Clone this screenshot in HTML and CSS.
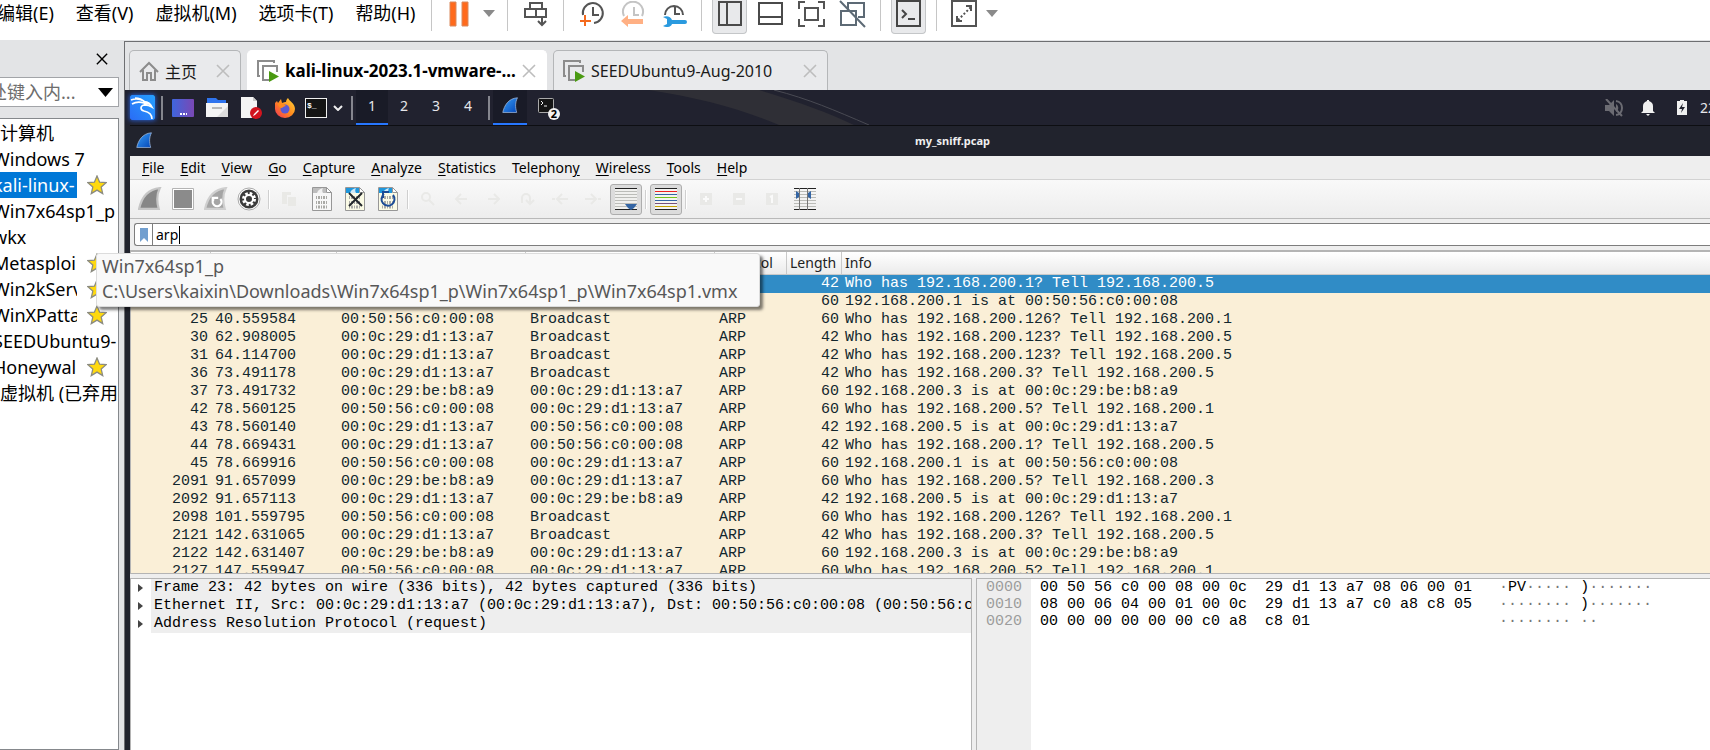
FILE: index.html
```
<!DOCTYPE html>
<html lang="zh-CN">
<head>
    <meta charset="UTF-8">
    <meta name="viewport" content="width=device-width, initial-scale=1.0">
    <title>kali-linux-2023.1 - VMware Workstation</title>
    <link rel="stylesheet" href="styles.css">
</head>
<body>
    <svg class="defs" width="0" height="0">
        <defs>
            <linearGradient id="fin-blue" x1="0" y1="0" x2="1" y2="1">
                <stop offset="0" stop-color="#3aa0f5"/>
                <stop offset="1" stop-color="#0345b8"/>
            </linearGradient>
            <linearGradient id="kali-bg" x1="0" y1="1" x2="1" y2="0">
                <stop offset="0" stop-color="#2a6cf5"/>
                <stop offset="1" stop-color="#25a0ff"/>
            </linearGradient>
            <linearGradient id="desk-bg" x1="0" y1="0" x2="1" y2="0">
                <stop offset="0" stop-color="#3f66dd"/>
                <stop offset="1" stop-color="#7a48b4"/>
            </linearGradient>
            <linearGradient id="fox-bg" x1="1" y1="0" x2="0" y2="1">
                <stop offset="0" stop-color="#ffd83a"/>
                <stop offset=".5" stop-color="#ff8a1e"/>
                <stop offset="1" stop-color="#f0305a"/>
            </linearGradient>
            <symbol id="fin" viewBox="0 0 22 22">
                <path d="M1 20C3 11 8 2 20 1c-3 6-3 12-1 19z"/>
            </symbol>
            <symbol id="star" viewBox="0 0 20 20">
                <path d="M10 1l2.6 6.2 6.6.5-5 4.4 1.5 6.5L10 15.1l-5.700 3.500 1.500-6.500-5-4.400 6.600-.5z" fill="#ffd90f" stroke="#8b8b80" stroke-width="1.300"/>
            </symbol>
            <symbol id="vm" viewBox="0 0 22 22">
                <path d="M3 16H1V1h16v2" fill="none" stroke="#8c8c8c" stroke-width="2"/>
                <path d="M12 20H6V6h14v6" fill="none" stroke="#8c8c8c" stroke-width="2"/>
                <path d="M12 11l10 5.500L12 22z" fill="#4a9a12"/>
            </symbol>
            <symbol id="cross" viewBox="0 0 14 14">
                <path d="M1 1l12 12M13 1L1 13" fill="none" stroke="currentColor" stroke-width="1.600"/>
            </symbol>
            <symbol id="bits" viewBox="0 0 20 24">
                <path d="M.5.5h14l5 5v18H.5z" fill="var(--paper)" stroke="#979797"/>
                <path d="M1 1h13v5H1z" fill="var(--band)"/>
                <path d="M5 6c1-3 3-4 6-5-1 2-1 3 0 5z" fill="#fff" opacity=".8"/>
                <path d="M14.500.5v5h5z" fill="#fff" stroke="#979797"/>
                <g fill="none" stroke="#aaaaa6" stroke-width="3">
                    <path d="M4 10.500h12M4 15.500h12M4 20h12" stroke-dasharray="1 1 2 1"/>
                </g>
            </symbol>
        </defs>
    </svg>

    <header class="app-bar">
        <nav class="app-menu">
            <a href="#">编辑(E)</a>
            <a href="#">查看(V)</a>
            <a href="#">虚拟机(M)</a>
            <a href="#">选项卡(T)</a>
            <a href="#">帮助(H)</a>
        </nav>
        <div class="tool-group tool-group--power">
            <button type="button" aria-label="暂停">
                <svg width="20" height="26"><path d="M1 1h6v24H1zM13 1h6v24h-6z" fill="#ff6a1c" stroke="#d98a5e"/></svg>
            </button>
            <button type="button" aria-label="电源选项">
                <svg width="12" height="7"><path d="M0 0h12L6 7z" fill="#8a8a8a"/></svg>
            </button>
        </div>
        <div class="tool-group">
            <button type="button" aria-label="发送 Ctrl+Alt+Del">
                <svg width="24" height="26" fill="none" stroke="#545454" stroke-width="2">
                    <path d="M6 8V2h12v6M1 8h11v8H1zM12 8h10v8H12M18 16v8M14 20l4 4 4-4"/>
                </svg>
            </button>
        </div>
        <div class="tool-group">
            <button type="button" aria-label="拍摄快照">
                <svg width="26" height="26" fill="none" stroke="#545454" stroke-width="2">
                    <path d="M4 14A10 10 0 1 1 15 22M14 6v8h6"/>
                    <path d="M1 20h11M6 14v11" stroke="#f46a1e"/>
                </svg>
            </button>
            <button type="button" aria-label="恢复快照">
                <svg width="26" height="26" fill="none" stroke="#c4c4c4" stroke-width="2">
                    <path d="M4 15A10 10 0 1 1 22 15M14 6v8h5"/>
                    <path d="M1 20l7-6v4h15v5H8v3z" fill="#ffb084" stroke="none"/>
                </svg>
            </button>
            <button type="button" aria-label="管理快照">
                <svg width="26" height="26" fill="none" stroke="#545454" stroke-width="2">
                    <path d="M4 14A9 9 0 1 1 22 14M14 5v8h5"/>
                    <path d="M2 16c4-2 8 0 9 3h13a2 2 0 0 1 0 4H11c-1 3-5 4-9 2l4-2v-5z" fill="#2a9adf" stroke="none"/>
                </svg>
            </button>
        </div>
        <div class="tool-group">
            <button type="button" class="is-on" aria-label="显示库">
                <svg width="24" height="26" fill="none" stroke="#4a4a4a" stroke-width="2"><path d="M1 2h22v23H1zM9 2v23"/></svg>
            </button>
            <button type="button" aria-label="缩略图栏">
                <svg width="25" height="24" fill="none" stroke="#4a4a4a" stroke-width="2"><path d="M1 1h23v21H1zM1 15h23"/></svg>
            </button>
            <button type="button" aria-label="全屏">
                <svg width="27" height="28" fill="none" stroke="#545454" stroke-width="2">
                    <path d="M1 9V2h6M20 2h6v7M26 19v7h-6M7 26H1v-7M7 8h13v12H7z"/>
                </svg>
            </button>
            <button type="button" aria-label="Unity">
                <svg width="27" height="28" fill="none" stroke="#5d6a75" stroke-width="2">
                    <path d="M9 9V3h16v14h-6M2 11h15v14H2zM1 1l25 26"/>
                </svg>
            </button>
        </div>
        <div class="tool-group">
            <button type="button" class="is-on" aria-label="控制台">
                <svg width="27" height="27" fill="none" stroke="#454545" stroke-width="2">
                    <path d="M2 1h23v25H2zM7 10l4 4-4 4M13 19h7"/>
                </svg>
            </button>
        </div>
        <div class="tool-group tool-group--fit">
            <button type="button" aria-label="自由拉伸">
                <svg width="27" height="27" fill="none" stroke="#545454" stroke-width="2">
                    <path d="M1 1h24v25H1zM15 6h5v5M6 16v5h5"/><path d="M7 20L20 7" stroke-dasharray="2 2"/>
                </svg>
            </button>
            <button type="button" aria-label="拉伸选项">
                <svg width="12" height="7"><path d="M0 0h12L6 7z" fill="#8a8a8a"/></svg>
            </button>
        </div>
    </header>

    <main class="main">
        <aside class="library">
            <div class="library-head">
                <button type="button" aria-label="关闭库"><svg width="12" height="12"><use href="#cross"/></svg></button>
            </div>
            <div class="library-search">
                <input type="text" aria-label="搜索库" placeholder="处键入内...">
                <button type="button" aria-label="筛选"><svg width="15" height="9"><path d="M0 0h15L7.500 9z"/></svg></button>
            </div>
            <ul class="library-list">
                <li><span class="vm-name vm-name--root">计算机</span></li>
                <li><span class="vm-name">Windows 7</span></li>
                <li class="is-selected"><span class="vm-name">kali-linux-</span><svg class="star"><use href="#star"/></svg></li>
                <li><span class="vm-name">Win7x64sp1_p</span></li>
                <li><span class="vm-name">wkx</span></li>
                <li><span class="vm-name">Metasploi</span><svg class="star"><use href="#star"/></svg></li>
                <li><span class="vm-name">Win2kServ</span><svg class="star"><use href="#star"/></svg></li>
                <li><span class="vm-name">WinXPatta</span><svg class="star"><use href="#star"/></svg></li>
                <li><span class="vm-name">SEEDUbuntu9-</span></li>
                <li><span class="vm-name">Honeywal</span><svg class="star"><use href="#star"/></svg></li>
                <li><span class="vm-name vm-name--root">虚拟机 (已弃用)</span></li>
            </ul>
            <div class="tooltip" role="tooltip">Win7x64sp1_p<br>C:\Users\kaixin\Downloads\Win7x64sp1_p\Win7x64sp1_p\Win7x64sp1.vmx</div>
        </aside>

        <section class="workspace">
            <div class="tabs">
                <div class="tab tab--home">
                    <svg width="20" height="20" fill="none" stroke="#8c8c8c" stroke-width="2"><path d="M1 11l9-9 9 9M4 9v10h4v-7h4v7h4V9"/></svg>
                    <span>主页</span>
                    <button type="button" aria-label="关闭"><svg width="14" height="14"><use href="#cross"/></svg></button>
                </div>
                <div class="tab tab--kali tab--active">
                    <svg width="22" height="22"><use href="#vm"/></svg>
                    <span>kali-linux-2023.1-vmware-...</span>
                    <button type="button" aria-label="关闭"><svg width="14" height="14"><use href="#cross"/></svg></button>
                </div>
                <div class="tab tab--seed">
                    <svg width="22" height="22"><use href="#vm"/></svg>
                    <span>SEEDUbuntu9-Aug-2010</span>
                    <button type="button" aria-label="关闭"><svg width="14" height="14"><use href="#cross"/></svg></button>
                </div>
            </div>

            <div class="panel">
                <button type="button" class="panel-kali" aria-label="Applications">
                    <svg width="25" height="25">
                        <rect width="25" height="25" rx="2" fill="url(#kali-bg)"/>
                        <path d="M1 5c5-2 9-1 13 1M2 9c5-3 9-2 12-1M5 3c4 0 7 1 10 4 4 0 6 3 7 5-3-2-6-2-8-2-4 1-4 5 0 6 5 1 8 3 8 8" fill="none" stroke="#fff" stroke-width="1.600"/>
                        <path d="M13 6c5 0 7 2 9 5-3-2-5-1-8-1z" fill="#fff"/>
                    </svg>
                </button>
                <i class="panel-sep"></i>
                <button type="button" class="launcher" aria-label="Show Desktop">
                    <svg width="22" height="18"><rect width="22" height="18" rx="1" fill="url(#desk-bg)"/><path d="M8 15h7" stroke="#fff" stroke-width="2" stroke-dasharray="2 1"/></svg>
                </button>
                <button type="button" class="launcher" aria-label="Files">
                    <svg width="22" height="21"><path d="M1 6V1h9l2 2h8v5z" fill="#2f74ee"/><path d="M0 6h22v14H0z" fill="#f4f4f4"/><path d="M22 9v11H11z" fill="#dcdcdc"/><path d="M6 11h10" stroke="#b9b9b9" stroke-width="2"/></svg>
                </button>
                <button type="button" class="launcher" aria-label="Text Editor">
                    <svg width="22" height="22"><path d="M1 0h12l4 4v17H1z" fill="#f4f4f4"/><path d="M13 0v4h4z" fill="#c9c9c9"/><circle cx="16" cy="16" r="6" fill="#d3141e"/><path d="M13 19l1-2 4-4 1 1-4 4z" fill="#fff"/></svg>
                </button>
                <button type="button" class="launcher" aria-label="Firefox">
                    <svg width="22" height="22">
                        <path d="M1 6l2-2 1 2 3-4 1 4c2-1 3-1 4-1 0-2 1-3 2-4 1 3 7 5 7 11a10 9 0 0 1-20 0c0-2 0-4 0-6z" fill="url(#fox-bg)"/>
                        <circle cx="11" cy="12" r="4.500" fill="#5a5ad2"/>
                        <path d="M4 7c3-1 6 0 8 2-2 0-3 1-4 2-2 0-4-2-4-4z" fill="#ff8a1e"/>
                    </svg>
                </button>
                <button type="button" class="launcher launcher--term" aria-label="Terminal">
                    <svg width="22" height="20"><rect x=".5" y=".5" width="21" height="19" fill="#141414" stroke="#f0f0f0"/><text x="2" y="10" class="prompt">$_</text></svg>
                </button>
                <button type="button" class="launcher-more" aria-label="More">
                    <svg width="10" height="6"><path d="M1 1l4 4 4-4" fill="none" stroke="#eee" stroke-width="2"/></svg>
                </button>
                <i class="panel-sep"></i>
                <button type="button" class="desk desk--active">1</button>
                <button type="button" class="desk">2</button>
                <button type="button" class="desk">3</button>
                <button type="button" class="desk">4</button>
                <i class="panel-sep"></i>
                <button type="button" class="task task--active" aria-label="Wireshark">
                    <svg class="fin" width="17" height="17"><use href="#fin"/></svg>
                </button>
                <button type="button" class="task task--term" aria-label="Terminal windows">
                    <svg width="16" height="15"><rect x=".5" y=".5" width="15" height="14" rx="1" fill="#141414" stroke="#aaa"/><path d="M3 3l2 2-2 2M6 8h3" fill="none" stroke="#eee"/></svg>
                    <span class="badge">2</span>
                </button>
                <svg class="panel-art" width="220" height="35">
                    <path d="M0 0h110c40 12 68 22 95 35h-75C90 18 50 8 0 0z" fill="#2f2f36"/>
                    <path d="M125 0c35 9 60 20 95 35" fill="none" stroke="#494a53"/>
                </svg>
                <div class="tray">
                    <svg width="18" height="18" fill="#6b6b72"><path d="M0 6h4l5-5v16l-5-5H0zM11 5c3 2 3 6 0 8z"/><path d="M11 2c8 1 8 13 0 14M1 0l16 17" fill="none" stroke="#6b6b72" stroke-width="2"/></svg>
                    <svg width="14" height="16" fill="#f0f0f0"><path d="M0 13l2-2V6c0-3 2-4 4-5V0h2v1c2 1 4 2 4 5v5l2 2zM5 14h4l-2 2z"/></svg>
                    <svg class="battery" width="10" height="15" fill="#f0f0f0"><path d="M0 1h3V0h4v1h3v14H0z"/><path d="M6 3L2 9h3l-1 4 4-6H5z" fill="#22232f"/></svg>
                    <span class="clock">22</span>
                </div>
            </div>

            <div class="window">
                <div class="title-bar">
                    <svg class="fin" width="17" height="17"><use href="#fin"/></svg>
                    <h1>my_sniff.pcap</h1>
                </div>
                <div class="client">
                    <nav class="menu">
                        <a href="#"><u>F</u>ile</a>
                        <a href="#"><u>E</u>dit</a>
                        <a href="#"><u>V</u>iew</a>
                        <a href="#"><u>G</u>o</a>
                        <a href="#"><u>C</u>apture</a>
                        <a href="#"><u>A</u>nalyze</a>
                        <a href="#"><u>S</u>tatistics</a>
                        <a href="#">Telephon<u>y</u></a>
                        <a href="#"><u>W</u>ireless</a>
                        <a href="#"><u>T</u>ools</a>
                        <a href="#"><u>H</u>elp</a>
                    </nav>

                    <div class="toolbar">
                        <button type="button" aria-label="Start capture"><svg width="24" height="24" viewBox="0 0 22 22" fill="#878787" stroke="#c6c6c6" stroke-width="2"><use href="#fin"/></svg></button>
                        <button type="button" aria-label="Stop capture"><svg width="22" height="22"><path d="M.5.5h21v21H.5z" fill="#fff" stroke="#b4b4b4"/><path d="M2 2h18v18H2z" fill="#8b8b8b"/></svg></button>
                        <button type="button" aria-label="Restart capture"><svg width="24" height="24" viewBox="0 0 22 22"><use href="#fin" fill="#a5a5a5" stroke="#cfcfcf" stroke-width="2"/><path d="M9 11a4 4 0 1 0 6 0M8 15v-5h5" fill="none" stroke="#fff" stroke-width="2"/></svg></button>
                        <button type="button" aria-label="Capture options">
                            <svg width="24" height="24"><circle cx="12" cy="12" r="11" fill="#fff" stroke="#aaa"/><circle cx="12" cy="12" r="9.500" fill="#3b3b3b"/><circle cx="12" cy="12" r="5.500" fill="none" stroke="#fff" stroke-width="3" stroke-dasharray="2.500 1.820"/><circle cx="12" cy="12" r="4" fill="none" stroke="#fff" stroke-width="2"/></svg>
                        </button>
                        <i class="toolbar-sep"></i>
                        <button type="button" disabled aria-label="Open"><svg width="16" height="16" fill="#e9e9e6"><path d="M1 1h9v3H6v9H1zM7 6h8v9H7z"/></svg></button>
                        <button type="button" class="doc doc--gray" disabled aria-label="Save"><svg width="20" height="24"><use href="#bits"/></svg></button>
                        <button type="button" class="doc" aria-label="Close file"><svg width="20" height="24"><use href="#bits"/><path d="M4 6l13 13M17 6L4 19" stroke="#23282c" stroke-width="2"/></svg></button>
                        <button type="button" class="doc" aria-label="Reload file"><svg width="20" height="24"><use href="#bits"/><path d="M6 7a6.500 6.500 0 1 0 9 1M11 5H5v6" fill="none" stroke="#1c4c96" stroke-width="2"/></svg></button>
                        <i class="toolbar-sep"></i>
                        <button type="button" class="dim" disabled aria-label="Find"><svg width="16" height="16"><circle cx="6" cy="6" r="4"/><path d="M9 9l5 5"/></svg></button>
                        <button type="button" class="dim" disabled aria-label="Back"><svg width="16" height="16"><path d="M14 8H3M8 3L3 8l5 5"/></svg></button>
                        <button type="button" class="dim" disabled aria-label="Forward"><svg width="16" height="16"><path d="M2 8h11M8 3l5 5-5 5"/></svg></button>
                        <button type="button" class="dim" disabled aria-label="Go to packet"><svg width="16" height="16"><path d="M3 12V7a4 4 0 0 1 8 0v5M7 9l4 4 4-4"/></svg></button>
                        <button type="button" class="dim" disabled aria-label="First packet"><svg width="18" height="16"><path d="M17 8H7M11 3L6 8l5 5M1 8h3"/></svg></button>
                        <button type="button" class="dim" disabled aria-label="Last packet"><svg width="18" height="16"><path d="M1 8h10M7 3l5 5-5 5M14 8h3"/></svg></button>
                        <button type="button" class="is-checked" aria-label="Auto scroll">
                            <svg width="22" height="22" fill="none" stroke="#bbbcb8"><path d="M0 0h22v22H0z" fill="#f0f0ee" stroke="none"/><path d="M0 3.500h22M0 6.500h22M0 9.500h22M0 12.500h22M0 15.500h22M0 18.500h22"/><path d="M0 .5h22M0 21.500h22" stroke="#222"/><path d="M10 16h12l-3 4-3 2-3-2z" fill="#3465a4" stroke="none"/></svg>
                        </button>
                        <i class="toolbar-sep"></i>
                        <button type="button" class="is-checked" aria-label="Colorize">
                            <svg width="22" height="22"><path d="M0 0h22v22H0z" fill="#f4f4f2"/><path d="M0 .5h22M0 21.500h22" stroke="#222"/><path d="M0 3.500h22" stroke="#e22"/><path d="M0 6.500h22M0 12.500h22" stroke="#3465a4"/><path d="M0 9.500h22" stroke="#73c31a"/><path d="M0 15.500h22" stroke="#75507b"/><path d="M0 18.500h22" stroke="#c4a000"/></svg>
                        </button>
                        <i class="toolbar-sep"></i>
                        <button type="button" disabled aria-label="Zoom in"><svg width="12" height="12"><path d="M0 0h12v12H0z" fill="#e9e9e7"/><path d="M3 6h6M6 3v6" stroke="#fafafa" stroke-width="2"/></svg></button>
                        <button type="button" disabled aria-label="Zoom out"><svg width="12" height="12"><path d="M0 0h12v12H0z" fill="#e9e9e7"/><path d="M3 6h6" stroke="#fafafa" stroke-width="2"/></svg></button>
                        <button type="button" disabled aria-label="Normal size"><svg width="12" height="12"><path d="M0 0h12v12H0z" fill="#e9e9e7"/><path d="M4 4l2-1v7" fill="none" stroke="#fafafa" stroke-width="2"/></svg></button>
                        <button type="button" aria-label="Resize columns">
                            <svg width="22" height="22" fill="none" stroke="#bbbcb8"><path d="M0 3.500h22M0 6.500h22M0 9.500h22M0 12.500h22M0 15.500h22M0 18.500h22"/><path d="M0 .5h22M0 21.500h22" stroke="#222"/><path d="M5.500 0v22M13.500 0v22" stroke="#777"/><path d="M2 3l3 2v4l-3 2zM17 3l-3 2v4l3 2z" fill="#3465a4" stroke="none"/></svg>
                        </button>
                    </div>

                    <div class="filter">
                        <button type="button" aria-label="Filter bookmarks"><svg width="8" height="14"><path d="M0 0h8v14l-4-4-4 4z" fill="#729fcf"/></svg></button>
                        <input type="text" aria-label="Display filter" value="arp"><i class="caret"></i>
                    </div>

                    <div class="packets">
                        <table>
                            <colgroup><col class="col-no"><col class="col-time"><col class="col-addr"><col class="col-addr"><col class="col-proto"><col class="col-len"><col></colgroup>
                            <thead>
                                <tr><th>No.</th><th>Time</th><th>Source</th><th>Destination</th><th>Protocol</th><th>Length</th><th>Info</th></tr>
                            </thead>
                            <tbody>
                                <tr class="is-current"><td>23</td><td>40.559301</td><td>00:0c:29:d1:13:a7</td><td>00:50:56:c0:00:08</td><td>ARP</td><td>42</td><td>Who has 192.168.200.1? Tell 192.168.200.5</td></tr>
                                <tr><td>24</td><td>40.559583</td><td>00:50:56:c0:00:08</td><td>00:0c:29:d1:13:a7</td><td>ARP</td><td>60</td><td>192.168.200.1 is at 00:50:56:c0:00:08</td></tr>
                                <tr><td>25</td><td>40.559584</td><td>00:50:56:c0:00:08</td><td>Broadcast</td><td>ARP</td><td>60</td><td>Who has 192.168.200.126? Tell 192.168.200.1</td></tr>
                                <tr><td>30</td><td>62.908005</td><td>00:0c:29:d1:13:a7</td><td>Broadcast</td><td>ARP</td><td>42</td><td>Who has 192.168.200.123? Tell 192.168.200.5</td></tr>
                                <tr><td>31</td><td>64.114700</td><td>00:0c:29:d1:13:a7</td><td>Broadcast</td><td>ARP</td><td>42</td><td>Who has 192.168.200.123? Tell 192.168.200.5</td></tr>
                                <tr><td>36</td><td>73.491178</td><td>00:0c:29:d1:13:a7</td><td>Broadcast</td><td>ARP</td><td>42</td><td>Who has 192.168.200.3? Tell 192.168.200.5</td></tr>
                                <tr><td>37</td><td>73.491732</td><td>00:0c:29:be:b8:a9</td><td>00:0c:29:d1:13:a7</td><td>ARP</td><td>60</td><td>192.168.200.3 is at 00:0c:29:be:b8:a9</td></tr>
                                <tr><td>42</td><td>78.560125</td><td>00:50:56:c0:00:08</td><td>00:0c:29:d1:13:a7</td><td>ARP</td><td>60</td><td>Who has 192.168.200.5? Tell 192.168.200.1</td></tr>
                                <tr><td>43</td><td>78.560140</td><td>00:0c:29:d1:13:a7</td><td>00:50:56:c0:00:08</td><td>ARP</td><td>42</td><td>192.168.200.5 is at 00:0c:29:d1:13:a7</td></tr>
                                <tr><td>44</td><td>78.669431</td><td>00:0c:29:d1:13:a7</td><td>00:50:56:c0:00:08</td><td>ARP</td><td>42</td><td>Who has 192.168.200.1? Tell 192.168.200.5</td></tr>
                                <tr><td>45</td><td>78.669916</td><td>00:50:56:c0:00:08</td><td>00:0c:29:d1:13:a7</td><td>ARP</td><td>60</td><td>192.168.200.1 is at 00:50:56:c0:00:08</td></tr>
                                <tr><td>2091</td><td>91.657099</td><td>00:0c:29:be:b8:a9</td><td>00:0c:29:d1:13:a7</td><td>ARP</td><td>60</td><td>Who has 192.168.200.5? Tell 192.168.200.3</td></tr>
                                <tr><td>2092</td><td>91.657113</td><td>00:0c:29:d1:13:a7</td><td>00:0c:29:be:b8:a9</td><td>ARP</td><td>42</td><td>192.168.200.5 is at 00:0c:29:d1:13:a7</td></tr>
                                <tr><td>2098</td><td>101.559795</td><td>00:50:56:c0:00:08</td><td>Broadcast</td><td>ARP</td><td>60</td><td>Who has 192.168.200.126? Tell 192.168.200.1</td></tr>
                                <tr><td>2121</td><td>142.631065</td><td>00:0c:29:d1:13:a7</td><td>Broadcast</td><td>ARP</td><td>42</td><td>Who has 192.168.200.3? Tell 192.168.200.5</td></tr>
                                <tr><td>2122</td><td>142.631407</td><td>00:0c:29:be:b8:a9</td><td>00:0c:29:d1:13:a7</td><td>ARP</td><td>60</td><td>192.168.200.3 is at 00:0c:29:be:b8:a9</td></tr>
                                <tr><td>2127</td><td>147.559947</td><td>00:50:56:c0:00:08</td><td>00:0c:29:d1:13:a7</td><td>ARP</td><td>60</td><td>Who has 192.168.200.5? Tell 192.168.200.1</td></tr>
                            </tbody>
                        </table>
                    </div>

                    <div class="panes">
                        <ul class="details">
                            <li><svg width="5" height="8"><path d="M0 0l5 4-5 4z"/></svg><span>Frame 23: 42 bytes on wire (336 bits), 42 bytes captured (336 bits)</span></li>
                            <li><svg width="5" height="8"><path d="M0 0l5 4-5 4z"/></svg><span>Ethernet II, Src: 00:0c:29:d1:13:a7 (00:0c:29:d1:13:a7), Dst: 00:50:56:c0:00:08 (00:50:56:c0:00:08)</span></li>
                            <li><svg width="5" height="8"><path d="M0 0l5 4-5 4z"/></svg><span>Address Resolution Protocol (request)</span></li>
                        </ul>
                        <div class="bytes">
<pre class="offsets">0000
0010
0020</pre>
<pre class="hex">00 50 56 c0 00 08 00 0c  29 d1 13 a7 08 06 00 01
08 00 06 04 00 01 00 0c  29 d1 13 a7 c0 a8 c8 05
00 00 00 00 00 00 c0 a8  c8 01</pre>
<pre class="ascii">·<b>PV</b>····· <b>)</b>·······
········ <b>)</b>·······
········ ··</pre>
                        </div>
                    </div>
                </div>
            </div>
        </section>
    </main>
</body>
</html>
```
FILE: styles.css
```
* {
    box-sizing: border-box;
}

body {
    margin: 0;
    height: 100vh;
    display: flex;
    flex-direction: column;
    overflow: hidden;
    background: #e3e4e6;
    color: #000;
    font-family: "Noto Sans", "Noto Sans CJK SC", sans-serif;
    font-size: 18px;
}

button {
    display: flex;
    align-items: center;
    justify-content: center;
    padding: 0;
    border: 0;
    background: none;
    font: inherit;
    color: inherit;
}

input {
    min-width: 0;
    padding: 0;
    border: 0;
    outline: 0;
    background: none;
    font: inherit;
    color: inherit;
}

a {
    color: inherit;
    text-decoration: none;
}

ul {
    margin: 0;
    padding: 0;
    list-style: none;
}

.defs {
    position: absolute;
}

/* VMware menu and toolbar */
.app-bar {
    display: flex;
    flex: none;
    height: 40px;
    background: #fff;
}

.app-menu {
    display: flex;
    gap: 22px;
    width: 434px;
    margin-left: -3px;
    flex: none;
    line-height: 26px;
    white-space: nowrap;
}

.tool-group {
    display: flex;
    height: 31px;
    padding: 0 7px;
    border-left: 1px solid #c6c6c6;
}

.tool-group button {
    width: 41px;
    height: 27px;
    flex: none;
}

.tool-group--power button {
    width: 30px;
}

.tool-group--power {
    width: 76px;
    padding: 0 12px;
}

.tool-group--fit button + button {
    width: 14px;
}

.tool-group .is-on {
    width: 35px;
    height: 34px;
    margin: 0 3px;
    padding-bottom: 7px;
    border: 1px solid #c4c6c8;
    border-top: 0;
    border-radius: 0 0 4px 4px;
    background: #e8e9eb;
}

.main {
    display: flex;
    flex: 1;
    min-height: 0;
}

/* VM library */
.library {
    position: relative;
    width: 124px;
    flex: none;
    display: flex;
    flex-direction: column;
    padding-right: 5px;
}

.library-head {
    display: flex;
    justify-content: flex-end;
    height: 37px;
    padding-right: 11px;
}

.library-search {
    display: flex;
    align-items: center;
    height: 30px;
    border: 1px solid #a2a4a8;
    border-left: 0;
    background: #fff;
    overflow: hidden;
}

.library-search input {
    flex: 1;
    margin-left: -11px;
}

.library-search input::placeholder {
    color: #6d6d6d;
}

.library-search button {
    width: 26px;
}

.library-list {
    flex: 1;
    margin-top: 11px;
    padding-top: 1px;
    border: 1px solid #85888c;
    border-left: 0;
    background: #fff;
}

.library-list li {
    display: flex;
    align-items: center;
    height: 26px;
    line-height: 26px;
}

.vm-name {
    flex: 1;
    text-indent: -7px;
    overflow: hidden;
    white-space: nowrap;
}

.vm-name--root {
    text-indent: 0;
}

.is-selected .vm-name {
    background: #0078d7;
    color: #fff;
}

.star {
    width: 20px;
    height: 20px;
    margin: 0 11px 0 10px;
}

.tooltip {
    position: absolute;
    z-index: 2;
    top: 213px;
    left: 96px;
    width: 664px;
    padding: 0 5px 2px;
    border: 1px solid #dcdcdc;
    border-radius: 3px;
    background: #f9f9f9;
    box-shadow: 3px 3px 3px rgba(0, 0, 0, .5);
    color: #575757;
    line-height: 25px;
    white-space: nowrap;
}

/* tabs */
.workspace {
    display: flex;
    flex: 1;
    flex-direction: column;
    min-width: 0;
    margin-top: 1px;
    border: solid #6e6f72;
    border-width: 1px 0 0 1px;
}

.tabs {
    display: flex;
    gap: 6px;
    padding: 8px 4px 0;
    font-size: 16px;
}

.tab {
    display: flex;
    align-items: center;
    height: 40px;
    padding: 0 10px 0 9px;
    border: 1px solid #b4b6b8;
    border-bottom: 0;
    border-radius: 5px 5px 0 0;
    background: #e9eaec;
    color: #1a1a1a;
}

.tab span {
    flex: 1;
    padding-left: 6px;
    white-space: nowrap;
}

.tab button {
    color: #bdbdbd;
}

.tab--home {
    width: 112px;
}

.tab--kali {
    width: 300px;
}

.tab--seed {
    width: 275px;
}

.tab--active {
    border-color: #fff;
    background: #fff;
    color: #000;
    font-size: 17px;
    font-weight: bold;
}

/* Kali panel */
.panel {
    display: flex;
    flex: none;
    align-items: center;
    height: 35px;
    padding-left: 5px;
    background: #21222f;
    color: #e6e6ea;
    font-size: 14px;
    overflow: hidden;
}

.panel-kali {
    margin-right: 2px;
    box-shadow: 0 0 5px #2a6cf5;
}

.panel-sep {
    width: 2px;
    height: 24px;
    margin: 0 3px 0 4px;
    background: #85868e;
}

.launcher {
    width: 34px;
}

.launcher--term {
    width: 27px;
}

.launcher-more {
    width: 18px;
}

.prompt {
    fill: #fff;
    font: bold 8px "Liberation Mono", monospace;
}

.desk,
.task {
    width: 32px;
    height: 35px;
    padding-bottom: 2px;
    border-bottom: 2px solid transparent;
}

.task {
    width: 34px;
}

.desk--active,
.task--active {
    border-color: #2777ff;
    background: #191b27;
}

.fin {
    fill: url(#fin-blue);
    stroke: #9fb6d8;
}

.task--term {
    position: relative;
    width: 38px;
}

.badge {
    position: absolute;
    right: 5px;
    bottom: 3px;
    width: 12px;
    height: 12px;
    border-radius: 50%;
    background: #f2f2f2;
    color: #000;
    font-size: 11px;
    font-weight: bold;
    line-height: 12px;
}

.panel-art {
    margin-left: 84px;
}

.tray {
    display: flex;
    align-items: center;
    gap: 18px;
    margin-left: auto;
}

.battery {
    margin-left: 4px;
}

.clock {
    width: 10px;
    margin-left: -5px;
    overflow: hidden;
}

/* Wireshark */
.window {
    display: flex;
    flex: 1;
    flex-direction: column;
    min-height: 0;
    padding-left: 5px;
    background: #21232d;
}

.title-bar {
    display: flex;
    flex: none;
    align-items: center;
    height: 31px;
    padding: 0 0 2px 6px;
    border-top: 1px solid #0d0e12;
}

.title-bar h1 {
    flex: 1;
    margin: 0;
    padding-left: 42px;
    color: #f0f0f0;
    font-size: 11px;
    text-align: center;
}

.client {
    display: flex;
    flex: 1;
    flex-direction: column;
    min-height: 0;
    background: #eee;
    font-size: 14px;
}

.menu {
    display: flex;
    gap: 16px;
    height: 24px;
    padding-left: 12px;
    border-bottom: 1px solid #d2d2d2;
    line-height: 24px;
}

.menu u {
    text-underline-offset: 2px;
}

.toolbar {
    display: flex;
    flex: none;
    align-items: center;
    gap: 1px;
    height: 39px;
    padding-left: 4px;
    border-bottom: 1px solid #b9b9b9;
    background: linear-gradient(#f9f9f9, #ededed);
}

.toolbar button {
    width: 32px;
    height: 31px;
}

.toolbar .is-checked {
    border: 1px solid #adadad;
    border-radius: 3px;
    background: #dcdcdc;
}

.toolbar-sep {
    width: 2px;
    height: 19px;
    margin: 0 2px;
    border-left: 1px solid #cfcfcf;
    background: #fff;
}

.doc {
    --paper: #fbfbe6;
    --band: #1f97dc;
}

.doc--gray {
    --paper: #f7f7f7;
    --band: #bdbdbd;
}

.dim svg {
    fill: none;
    stroke: #e9e9e7;
    stroke-width: 2;
}

.filter {
    display: flex;
    flex: none;
    align-items: center;
    height: 23px;
    margin: 4px 0 4px 4px;
    border: 1px solid #7d7d7d;
    border-right: 0;
    border-radius: 3px 0 0 3px;
    background: #fff;
}

.filter button {
    width: 18px;
    height: 21px;
    margin-right: 3px;
    border-right: 1px solid #7d7d7d;
}

.filter input {
    width: 23px;
}

.caret {
    width: 1px;
    height: 18px;
    background: #000;
}

.packets {
    flex: 1;
    min-height: 0;
    border: 1px solid #b4b4b4;
    border-width: 2px 0 1px 1px;
    background: #faefd7;
    overflow: hidden;
}

.packets table {
    width: 100%;
    border-spacing: 0;
    table-layout: fixed;
    color: #12272e;
}

.col-no {
    width: 80px;
}

.col-time {
    width: 126px;
}

.col-addr {
    width: 189px;
}

.col-proto {
    width: 72px;
}

.col-len {
    width: 55px;
}

.packets th {
    height: 23px;
    padding: 0 3px;
    border: solid #c9c9c9;
    border-width: 0 1px 1px 0;
    background: linear-gradient(#fff, #ebebeb);
    color: #222;
    font-weight: normal;
    line-height: 22px;
    text-align: left;
}

.packets th:last-child {
    border-right: 0;
}

.packets td {
    height: 18px;
    padding: 0 3px 0 4px;
    font: 15px/18px "Liberation Mono", monospace;
    white-space: nowrap;
}

.packets td:last-child {
    padding-left: 3px;
}

.packets td:nth-child(1),
.packets td:nth-child(6) {
    text-align: right;
}

.is-current {
    background: #308cc6;
    color: #fff;
}

.panes {
    display: grid;
    grid-template-columns: 842fr 734fr;
    gap: 4px;
    flex: 0 0 172px;
    margin-top: 4px;
    font: 15px/18px "Liberation Mono", monospace;
}

.details,
.bytes {
    min-width: 0;
    border: 1px solid #b4b4b4;
    border-bottom: 0;
    background: #fff;
    overflow: hidden;
}

.details li {
    display: flex;
    align-items: center;
    gap: 8px;
    padding-left: 7px;
}

.details svg {
    flex: none;
    fill: #444;
}

.details span {
    flex: 1;
    padding-left: 3px;
    background: #eee;
    overflow: hidden;
    white-space: nowrap;
}

.bytes {
    display: flex;
    border-right: 0;
    line-height: 17px;
}

.bytes pre {
    margin: 0;
    font: inherit;
}

.offsets {
    width: 54px;
    padding-left: 9px;
    background: #eee;
    color: #9c9c9c;
}

.bytes .hex {
    margin-left: 9px;
}

.bytes .ascii {
    margin-left: 27px;
    color: #777;
}

.ascii b {
    color: #000;
    font-weight: normal;
}
```
